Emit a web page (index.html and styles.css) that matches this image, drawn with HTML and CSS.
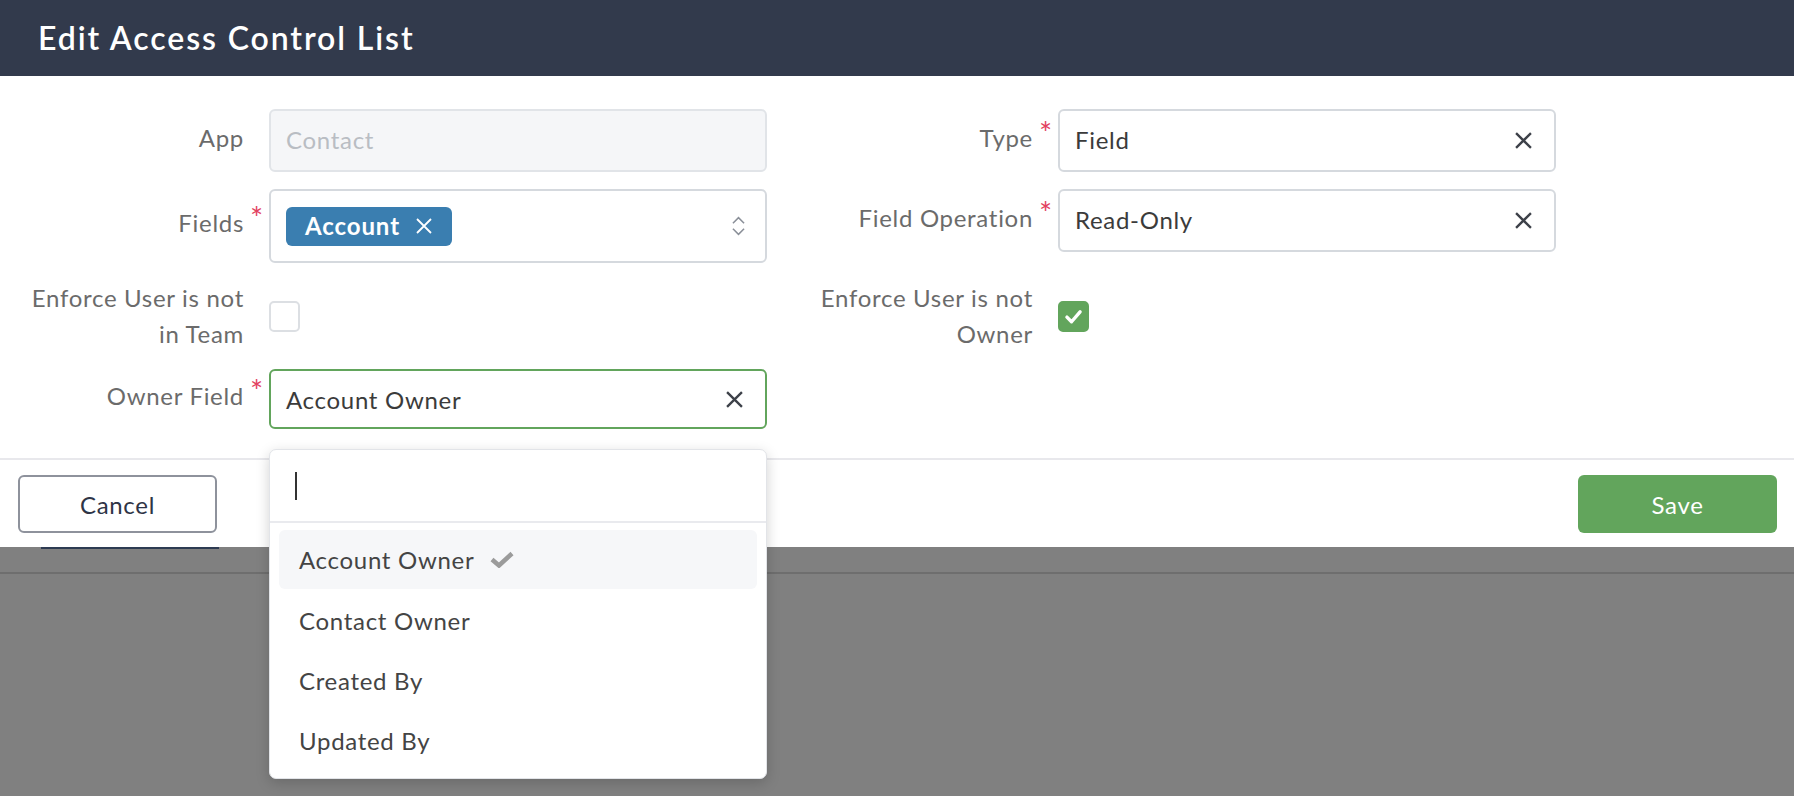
FILE: index.html
```html
<!DOCTYPE html>
<html>
<head>
  <meta charset="UTF-8">
  <title>Edit Access Control List</title>
  <link rel="stylesheet" href="styles.css">
</head>
<body>
  <div class="modal">
    <header class="modal-header">
      <h1>Edit Access Control List</h1>
    </header>

    <div class="modal-body">
      <div class="form-grid">
        <div class="field">
          <label class="field-label">App</label>
          <div class="input disabled">Contact</div>
        </div>
        <div class="field">
          <label class="field-label required">Type</label>
          <div class="input">
            <span class="value">Field</span>
            <svg class="clear" viewBox="0 0 16 16"><path d="M1 1L15 15M15 1L1 15"/></svg>
          </div>
        </div>

        <div class="field">
          <label class="field-label required">Fields</label>
          <div class="input multi">
            <span class="tag">Account <svg class="tag-x" viewBox="0 0 16 16"><path d="M1 1L15 15M15 1L1 15"/></svg></span>
            <svg class="updown" viewBox="0 0 14 20"><path d="M1 7L7 1L13 7M1 13L7 19L13 13"/></svg>
          </div>
        </div>
        <div class="field">
          <label class="field-label required">Field Operation</label>
          <div class="input">
            <span class="value">Read-Only</span>
            <svg class="clear" viewBox="0 0 16 16"><path d="M1 1L15 15M15 1L1 15"/></svg>
          </div>
        </div>

        <div class="field">
          <label class="field-label two-line">Enforce User is not in Team</label>
          <span class="checkbox"></span>
        </div>
        <div class="field">
          <label class="field-label two-line">Enforce User is not Owner</label>
          <span class="checkbox checked">
            <svg viewBox="0 0 16 16"><path d="M3 8.5L6.5 12L13 4.5"/></svg>
          </span>
        </div>

        <div class="field">
          <label class="field-label required">Owner Field</label>
          <div class="select-wrap">
            <div class="input focused">
              <span class="value">Account Owner</span>
              <svg class="clear" viewBox="0 0 16 16"><path d="M1 1L15 15M15 1L1 15"/></svg>
            </div>
            <div class="dropdown">
              <div class="dropdown-search"><span class="caret"></span></div>
              <ul class="options">
                <li class="option selected">Account Owner
                  <svg class="tick" viewBox="0 0 24 16"><path d="M2 8L9 14L22 2"/></svg>
                </li>
                <li class="option">Contact Owner</li>
                <li class="option">Created By</li>
                <li class="option">Updated By</li>
              </ul>
            </div>
          </div>
        </div>
      </div>
    </div>

    <footer class="modal-footer">
      <button class="btn btn-cancel">Cancel</button>
      <button class="btn btn-save">Save</button>
    </footer>
  </div>

  <div class="behind">
    <div class="behind-btn"></div>
  </div>
</body>
</html>
```

FILE: styles.css
```css
body {
  margin: 0;
  background: #808080;
  font-family: 'Lato', 'Open Sans', sans-serif;
  letter-spacing: 0.7px;
  height: 796px;
  overflow: hidden;
}

.modal {
  background: white;
}

.modal-header {
  background: #323a4c;
  height: 76px;
  display: flex;
  align-items: center;
  padding-left: 38px;
}

.modal-header h1 {
  margin: 0 0 2px;
  color: white;
  font-size: 32px;
  font-weight: 600;
  letter-spacing: 1.9px;
}

.modal-body {
  padding: 33px 0 29px 16px;
  border-bottom: 2px solid #e8e8ec;
}

.form-grid {
  display: grid;
  grid-template-columns: 751px 751px;
  column-gap: 38px;
  row-gap: 17px;
  align-items: start;
}

.field {
  display: flex;
  align-items: center;
}

.field-label {
  position: relative;
  width: 228px;
  flex-shrink: 0;
  margin: -3px 25px 0 0;
  padding-bottom: 3px;
  text-align: right;
  font-size: 24px;
  line-height: 36px;
  color: #6b6b6b;
}

.field-label.two-line {
  margin-top: 0;
  padding-bottom: 0;
}

.field-label.required::after {
  content: '*';
  position: absolute;
  right: -20px;
  top: -6px;
  color: #e2425f;
  font-size: 31px;
}

.input {
  box-sizing: border-box;
  width: 498px;
  height: 63px;
  border: 2px solid #d5d9de;
  border-radius: 6px;
  display: flex;
  align-items: center;
  padding: 0 22px 3px 15px;
  font-size: 24px;
  color: #3b3b3b;
  background: white;
}

.input .value {
  flex: 1;
}

.input.disabled {
  background: #f5f6f8;
  border-color: #e1e4e8;
  color: #b9bdc3;
}

.input.multi {
  height: 74px;
  padding: 0 22px 0 15px;
  justify-content: space-between;
}

.input.focused {
  border-color: #62a55c;
  height: 60px;
  padding-bottom: 0;
}

.clear {
  width: 17px;
  height: 17px;
  fill: none;
  stroke: #3d4149;
  stroke-width: 2.2;
  margin-top: 3px;
}

.input.focused .clear {
  margin-top: 0;
}

.tag {
  display: inline-flex;
  align-items: center;
  gap: 16px;
  height: 39px;
  padding: 0 20px 1px 19px;
  box-sizing: border-box;
  background: #3a7eb0;
  color: white;
  border-radius: 6px;
  font-weight: 700;
  font-size: 24px;
  letter-spacing: 0.9px;
}

.tag-x {
  width: 16px;
  height: 16px;
  fill: none;
  stroke: white;
  stroke-width: 1.8;
}

.updown {
  width: 13px;
  height: 20px;
  fill: none;
  stroke: #8a8f98;
  stroke-width: 1.6;
  margin-right: -2px;
}

.checkbox {
  box-sizing: border-box;
  width: 31px;
  height: 31px;
  border: 2px solid #dcdfe3;
  border-radius: 5px;
  background: white;
  display: flex;
  align-items: center;
  justify-content: center;
}

.checkbox.checked {
  background: #62a55c;
  border-color: #62a55c;
}

.checkbox svg {
  width: 21px;
  height: 21px;
  fill: none;
  stroke: white;
  stroke-width: 2.6;
  stroke-linecap: round;
  stroke-linejoin: round;
}

.select-wrap {
  position: relative;
}

.dropdown {
  position: absolute;
  top: 80px;
  left: 0;
  width: 498px;
  box-sizing: border-box;
  background: white;
  border: 1px solid #e2e4e8;
  border-radius: 7px;
  box-shadow: 0 4px 14px rgba(0,0,0,0.18);
  z-index: 5;
}

.dropdown-search {
  height: 71px;
  border-bottom: 2px solid #e9eaee;
  display: flex;
  align-items: center;
  padding-left: 25px;
}

.caret {
  width: 2px;
  height: 28px;
  background: #333;
}

.options {
  list-style: none;
  margin: 0;
  padding: 7px 9px 8px;
}

.option {
  height: 60px;
  display: flex;
  align-items: center;
  padding-left: 20px;
  font-size: 24px;
  color: #444;
  border-radius: 6px;
}

.option.selected {
  background: #f6f7f9;
  height: 59px;
  margin-bottom: 1px;
}

.tick {
  width: 24px;
  height: 17px;
  margin-left: 16px;
  fill: none;
  stroke: #9b9b9b;
  stroke-width: 4.5;
}

.modal-footer {
  display: flex;
  justify-content: space-between;
  padding: 15px 17px 14px 18px;
}

.btn {
  height: 58px;
  width: 199px;
  border-radius: 6px;
  font-family: inherit;
  font-size: 24px;
  letter-spacing: 0.7px;
  cursor: pointer;
}

.btn-cancel {
  background: white;
  border: 2px solid #8e929c;
  color: #2e3446;
}

.btn-save {
  background: #62a55c;
  border: none;
  color: white;
}

.behind {
  height: 25px;
  border-bottom: 2px solid #6e6e6e;
}

.behind-btn {
  margin-left: 41px;
  width: 178px;
  height: 2px;
  background: #2d3b52;
}
```
